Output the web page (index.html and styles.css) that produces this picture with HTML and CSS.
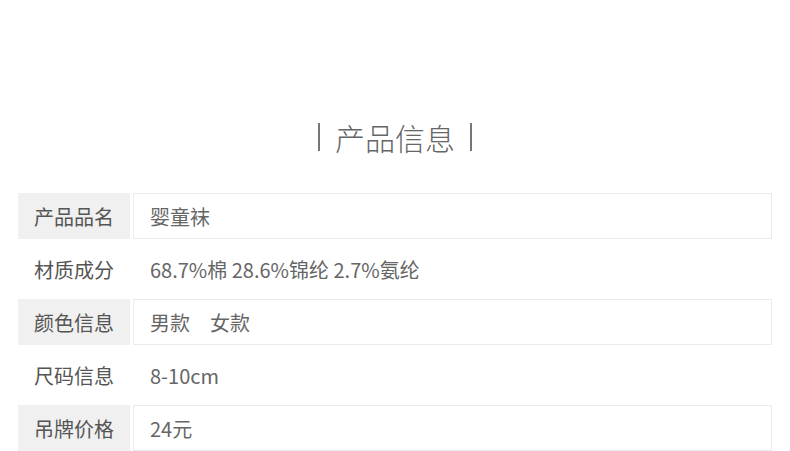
FILE: index.html
```html
<!DOCTYPE html>
<html lang="zh-CN">

<head>
    <meta charset="UTF-8">
    <meta name="viewport" content="width=device-width, initial-scale=1.0">
    <title>产品信息</title>
    <link rel="stylesheet" href="styles.css">
</head>

<body>
    <div class="page">
        <!-- 标题 -->
        <h2 class="section-title"><span class="bar"></span>产品信息<span class="bar"></span></h2>

        <!-- 产品参数表 -->
        <div class="info-table">
            <div class="info-row striped">
                <div class="info-label">产品品名</div>
                <div class="info-value">婴童袜</div>
            </div>
            <div class="info-row">
                <div class="info-label">材质成分</div>
                <div class="info-value">68.7%棉 28.6%锦纶 2.7%氨纶</div>
            </div>
            <div class="info-row striped">
                <div class="info-label">颜色信息</div>
                <div class="info-value">男款&emsp;女款</div>
            </div>
            <div class="info-row">
                <div class="info-label">尺码信息</div>
                <div class="info-value">8-10cm</div>
            </div>
            <div class="info-row striped">
                <div class="info-label">吊牌价格</div>
                <div class="info-value">24元</div>
            </div>
        </div>
    </div>
</body>

</html>
```

FILE: styles.css
```css
body {
    margin: 0;
    padding: 0;
    background-color: #fff;
    font-family: "Noto Sans CJK SC", "Noto Sans", sans-serif;
    color: #555;
}

.page {
    padding: 0 18px;
}

.section-title {
    margin: 0 0 34px;
    padding-top: 115px;
    line-height: 44px;
    font-size: 30px;
    font-weight: 300;
    color: #666;
    text-align: center;
    display: flex;
    justify-content: center;
    align-items: center;
}

/* 标题两侧竖线 */
.section-title .bar {
    display: block;
    width: 2px;
    height: 28px;
    margin: 0 15px;
    background-color: #777;
}

.info-table {
    display: flex;
    flex-direction: column;
    gap: 7px;
}

.info-row {
    display: flex;
    gap: 3px;
    height: 46px;
    font-size: 20px;
}

.info-label {
    width: 96px;
    padding-left: 16px;
    display: flex;
    align-items: center;
    color: #555;
}

.info-value {
    flex: 1;
    padding-left: 16px;
    display: flex;
    align-items: center;
    border: 1px solid transparent;
    color: #666;
}

.striped .info-label {
    background-color: #f0f0f0;
}

.striped .info-value {
    border-color: #ebebeb;
}
```
